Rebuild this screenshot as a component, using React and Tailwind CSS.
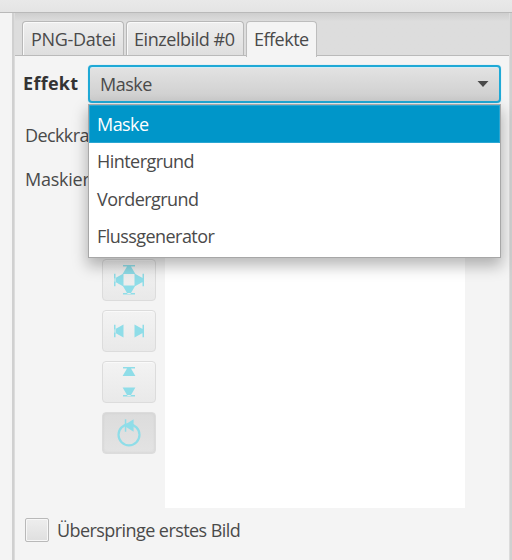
import React from "react";

const iconColor = "#8fdde8";

function Tab({ children, active, className }) {
  return (
    <div
      className={`flex shrink-0 items-start rounded-t-[4px] border border-b-0 pt-[5px] pl-[8px] ${
        active
          ? "relative h-[36px] border-[#bdbdbd] bg-[#f4f4f4]"
          : "h-[34px] border-[#b8b8b8] bg-linear-to-b from-[#efefef] to-[#dedede] shadow-[inset_1px_1px_0_#fafafa]"
      } ${className}`}
    >
      {children}
    </div>
  );
}

function ToolButton({ pressed, children }) {
  return (
    <div
      className={`flex h-[42px] w-[54px] items-center justify-center rounded-[4px] border border-[#dcdcdc] ${
        pressed
          ? "bg-linear-to-b from-[#dcdcdc] to-[#e3e3e3] shadow-[inset_0_0_3px_#cfcfcf]"
          : "bg-linear-to-b from-[#f3f3f3] to-[#e9e9e9] shadow-[inset_0_1px_0_#fafafa]"
      }`}
    >
      <svg className="-ml-px" width="32" height="32" viewBox="0 0 32 32" fill={iconColor}>
        {children}
      </svg>
    </div>
  );
}

function Item({ children, selected }) {
  return (
    <div
      className={`flex h-[37.5px] items-center pl-[8px] tracking-[-0.55px] ${
        selected ? "bg-[#0096c9] text-white shadow-[inset_0_0_0_1px_#2aa6d2]" : ""
      }`}
    >
      {children}
    </div>
  );
}

const vertical =
  "M10 1h12v1.5H10zM14.6 1.5h2.8l5 8.5h-12.8zM10 29h12v1.5H10zM14.6 30h2.8l5-8.5h-12.8z";
const horizontal =
  "M1 9.7h1.5v12.6H1zM1.5 14.6v2.8l9 5v-12.8zM29.5 9.7H31v12.6h-1.5zM30.5 14.6v2.8l-9 5v-12.8z";

export default function App() {
  return (
    <div className="flex h-[560px] w-[512px] flex-col overflow-hidden bg-[#f4f4f4] font-['Open_Sans','Noto_Sans',sans-serif] text-[18px] leading-[24px] whitespace-nowrap text-[#4a4a4a]">
      <div className="h-[13px] shrink-0 border-b border-[#b9b9b9] bg-linear-to-b from-[#e9e9e9] to-[#e4e4e4]" />
      <div className="flex min-h-0 flex-1">
        <div className="w-[12px] shrink-0 bg-[#f4f4f4]" />
        <div className="w-[3px] shrink-0 border-r border-[#dcdcdc] bg-[#d0d0d0]" />
        <div className="flex min-w-0 flex-1 flex-col">
          <div className="flex h-[43px] shrink-0 items-start gap-[3px] border-b border-[#bababa] bg-linear-to-b from-[#cecece] to-[#dddddd] to-20% pt-[8px] pl-[7px]">
            <Tab className="w-[102px]"><span className="tracking-[-0.3px]">PNG-Datei</span></Tab>
            <Tab className="-ml-px w-[118px]"><span className="-ml-px tracking-[-0.45px]">Einzelbild #0</span></Tab>
            <Tab active className="-ml-px w-[71px]"><span className="-ml-px tracking-[-0.5px]">Effekte</span></Tab>
          </div>

          <div className="flex flex-1 flex-col">
            <div className="flex pt-[9px] pl-[8px]">
              <span className="mt-[6px] w-[65px] font-bold tracking-[0.3px] text-[#333]">Effekt</span>
              <div className="relative">
                <div className="flex h-[38px] w-[413px] items-center justify-between rounded-[4px] border-2 border-[#1fa9d6] bg-linear-to-b from-[#e3e3e3] to-[#cdcdcd] pr-[10px] pl-[10px] shadow-[inset_0_1px_0_#d3edf6,0_0_1px_#7dcbe5]">
                  <span className="tracking-[-0.5px]">Maske</span>
                  <svg width="12" height="6" viewBox="0 0 12 6"><path d="M0.5 0H11.5L6 6Z" fill="#4a4a4a" /></svg>
                </div>
                <div className="absolute top-[39px] left-0 z-10 h-[154px] w-[413px] border border-[#a7a7a7] bg-white shadow-[0_7px_14px_1px_rgba(0,0,0,0.28)]">
                  <Item selected>Maske</Item>
                  <Item>Hintergrund</Item>
                  <Item>Vordergrund</Item>
                  <Item>Flussgenerator</Item>
                </div>
              </div>
            </div>
            <div className="mt-[20px] pl-[10px] tracking-[-0.6px]">Deckkraft</div>
            <div className="mt-[20px] pl-[10px] tracking-[-0.25px]">Maskierung</div>
            <div className="mt-[17px] flex pl-[87px]">
              <div className="mt-[51px] flex w-[63px] flex-col gap-[9px]">
                <ToolButton>
                  <path d={vertical} />
                  <path d={horizontal} />
                </ToolButton>
                <ToolButton>
                  <path d={horizontal} />
                </ToolButton>
                <ToolButton>
                  <path d={vertical} />
                </ToolButton>
                <ToolButton pressed>
                  <circle cx="16" cy="17.8" r="10.5" fill="none" stroke={iconColor} strokeWidth="2.2" />
                  <path d="M11.8 2.3h1.5v12.4h-1.5zM12.3 7.5l8.3-5.2v12.4l-8.3-5.2z" />
                </ToolButton>
              </div>
              <div className="h-[300px] w-[300px] bg-white" />
            </div>
            <div className="mt-[10px] flex items-center pl-[10px]">
              <div className="h-[24px] w-[24px] rounded-[2px] border border-[#b9b9b9] bg-linear-to-b from-[#eeeeee] to-[#dfdfdf] shadow-[inset_0_0_0_1px_#f7f7f7]" />
              <span className="ml-[8px] tracking-[-0.57px]">Überspringe erstes Bild</span>
            </div>
          </div>
        </div>
        <div className="w-[3px] shrink-0 border-l border-[#dcdcdc] bg-[#d0d0d0]" />
      </div>
    </div>
  );
}
